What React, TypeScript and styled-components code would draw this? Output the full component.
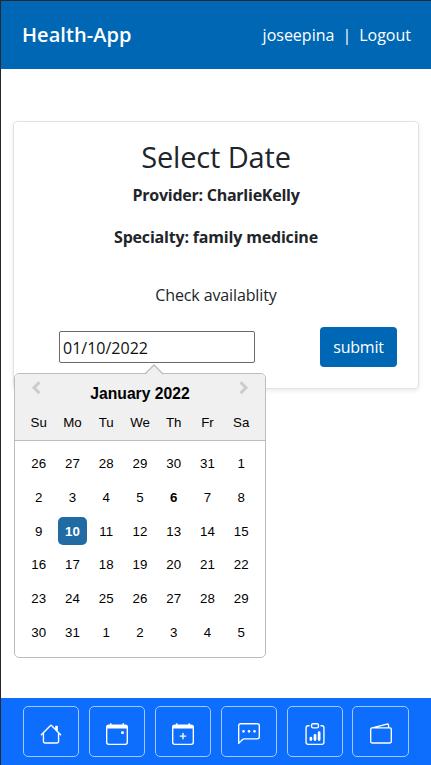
import React from "react";
import styled, { createGlobalStyle } from "styled-components";
import {
  BsHouse,
  BsCalendarEvent,
  BsCalendarPlus,
  BsChatLeftDots,
  BsClipboardData,
  BsWallet2,
} from "react-icons/bs";

const GlobalStyle = createGlobalStyle`
  *, *::before, *::after { box-sizing: border-box; }
  body {
    margin: 0;
    background: #fff;
    color: #212529;
    font-family: "Open Sans", "Noto Sans", sans-serif;
  }
`;

const Page = styled.div`
  display: flex;
  flex-direction: column;
  height: 765px;
  border-top: 1px solid #26282d;
  border-left: 1px solid #26282d;
`;

const Header = styled.header`
  display: flex;
  align-items: center;
  justify-content: space-between;
  flex: none;
  height: 68px;
  padding: 0 20px 0 21px;
  background: #0067b5;
  color: #fff;
`;

const Brand = styled.span`
  font-size: 20px;
  font-weight: 600;
  line-height: 30px;
  letter-spacing: 0.05px;
`;

const Account = styled.nav`
  display: flex;
  gap: 8px;
  font-size: 16px;
  line-height: 26px;
`;

const Main = styled.main`
  flex: 1;
  padding: 52px 12px 0;
`;

const Card = styled.section`
  display: flex;
  flex-direction: column;
  align-items: center;
  height: 268px;
  padding-top: 17px;
  border: 1px solid #e2e2e2;
  border-radius: 4px;
  box-shadow: 0 2px 4px rgba(0, 0, 0, 0.08);
`;

const Title = styled.h1`
  margin: 0;
  font-size: 29px;
  font-weight: 500;
  line-height: 36px;
  letter-spacing: -0.15px;
`;

const Detail = styled.p<{ $gap: number; $bold?: boolean; $spacing: number }>`
  margin: ${(p) => p.$gap}px 0 0;
  font-size: 16px;
  font-weight: ${(p) => (p.$bold ? 700 : 400)};
  line-height: 26px;
  letter-spacing: ${(p) => p.$spacing}px;
`;

const Form = styled.div`
  display: flex;
  align-items: center;
  width: 100%;
  height: 40px;
  margin-top: 19px;
  padding: 0 21px 0 45px;
  justify-content: space-between;
`;

const Field = styled.div`
  position: relative;
  width: 196px;
  height: 32px;
`;

const DateInput = styled.input`
  display: block;
  width: 100%;
  height: 100%;
  padding: 1px 3px 0;
  border: 1px solid #6a6a6a;
  border-radius: 2px;
  outline: none;
  background: #fff;
  color: #111;
  font: 400 16px "Open Sans", sans-serif;
`;

const Submit = styled.button`
  width: 77px;
  height: 40px;
  padding: 0;
  border: 0;
  border-radius: 4px;
  background: #0067b5;
  color: #fff;
  font: 400 16px "Open Sans", sans-serif;
  letter-spacing: -0.2px;
`;

const Popup = styled.div`
  position: absolute;
  z-index: 2;
  top: 42px;
  left: -45px;
  width: 252px;
  height: 285px;
  border: 1px solid #bcbcbc;
  border-radius: 5px;
  background: #fff;
  color: #000;
  font-family: "Liberation Sans", Arial, sans-serif;
`;

const Pointer = styled.svg`
  position: absolute;
  top: -10px;
  left: 129.5px;
`;

const CalendarHead = styled.div`
  height: 67px;
  border-bottom: 1px solid #bcbcbc;
  border-radius: 4px 4px 0 0;
  background: #f0f0f0;
`;

const MonthBar = styled.div`
  display: flex;
  justify-content: space-between;
  height: 31px;
  padding: 6px 16px 0;
`;

const Month = styled.div`
  padding-top: 4px;
  font-size: 15.7px;
  font-weight: 700;
  line-height: 20px;
`;

const Grid = styled.div<{ $rowHeight: number }>`
  display: grid;
  grid-template-columns: repeat(7, 33.75px);
  grid-auto-rows: ${(p) => p.$rowHeight}px;
  justify-content: center;
  align-items: center;
  justify-items: center;
  font-size: 13.3px;
`;

const Weeks = styled.div`
  padding-top: 5px;
`;

const Day = styled.span<{ $selected?: boolean; $today?: boolean }>`
  width: 28.4px;
  height: 28.4px;
  border-radius: 5px;
  line-height: 29px;
  text-align: center;
  background: ${(p) => (p.$selected ? "#216ba5" : "transparent")};
  color: ${(p) => (p.$selected ? "#fff" : "#000")};
  font-weight: ${(p) => (p.$selected || p.$today ? 700 : 400)};
`;

const BottomBar = styled.nav`
  display: flex;
  flex: none;
  gap: 9.6px;
  height: 67px;
  padding: 8px 0 0 22px;
  background: #0d6efd;
`;

const NavButton = styled.button`
  display: flex;
  align-items: center;
  justify-content: center;
  width: 56.3px;
  height: 51px;
  padding: 5px 0 0;
  border: 1px solid #a4c7fe;
  border-radius: 5px;
  background: transparent;
  color: #fff;
`;

const weekdays = ["Su", "Mo", "Tu", "We", "Th", "Fr", "Sa"];

/* Six weeks starting on Sunday, December 26. */
const days = Array.from({ length: 42 }, (_, i) => new Date(2021, 11, 26 + i));

const navItems = [
  { label: "Home", Icon: BsHouse },
  { label: "Appointments", Icon: BsCalendarEvent },
  { label: "New appointment", Icon: BsCalendarPlus },
  { label: "Messages", Icon: BsChatLeftDots },
  { label: "Results", Icon: BsClipboardData },
  { label: "Billing", Icon: BsWallet2 },
];

function Arrow({ next }: { next?: boolean }) {
  return (
    <svg width="10" height="15" viewBox="0 0 10 15" fill="none" stroke="#ccc" strokeWidth="3">
      <path d={next ? "M1.5 2.3 7 7.8 1.5 13.3" : "M8.5 2.3 3 7.8 8.5 13.3"} />
    </svg>
  );
}

function Calendar() {
  return (
    <Popup>
      <Pointer width="18" height="11" viewBox="0 0 18 11">
        <path d="M0.5 10 9 1.5 17.5 10V11H.5Z" fill="#f0f0f0" />
        <path d="M0 10 9 1 18 10" fill="none" stroke="#bcbcbc" strokeWidth="1.3" />
      </Pointer>
      <CalendarHead>
        <MonthBar>
          <Arrow />
          <Month>January 2022</Month>
          <Arrow next />
        </MonthBar>
        <Grid $rowHeight={34}>
          {weekdays.map((d) => (
            <span key={d}>{d}</span>
          ))}
        </Grid>
      </CalendarHead>
      <Weeks>
        <Grid $rowHeight={33.9}>
          {days.map((d, i) => (
            <Day key={i} $selected={i === 15} $today={i === 11}>
              {d.getDate()}
            </Day>
          ))}
        </Grid>
      </Weeks>
    </Popup>
  );
}

export default function App() {
  return (
    <>
      <GlobalStyle />
      <Page>
        <Header>
          <Brand>Health-App</Brand>
          <Account>
            <span>joseepina</span>
            <span>|</span>
            <span>Logout</span>
          </Account>
        </Header>
        <Main>
          <Card>
            <Title>Select Date</Title>
            <Detail $gap={7} $bold $spacing={-0.25}>Provider: CharlieKelly</Detail>
            <Detail $gap={16} $bold $spacing={-0.18}>Specialty: family medicine</Detail>
            <Detail $gap={32} $spacing={-0.12}>Check availablity</Detail>
            <Form>
              <Field>
                <DateInput defaultValue="01/10/2022" />
                <Calendar />
              </Field>
              <Submit>submit</Submit>
            </Form>
          </Card>
        </Main>
        <BottomBar>
          {navItems.map(({ label, Icon }) => (
            <NavButton key={label} aria-label={label}>
              <Icon size={22} />
            </NavButton>
          ))}
        </BottomBar>
      </Page>
    </>
  );
}
